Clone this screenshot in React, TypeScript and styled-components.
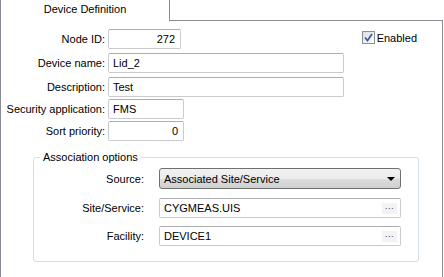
import * as React from "react";
import styled, { createGlobalStyle } from "styled-components";

const Global = createGlobalStyle`
	html, body {
		margin: 0;
		padding: 0;
		background: #ffffff;
	}
	body {
		font-family: "Liberation Sans", Arial, sans-serif;
		font-size: 11px;
		color: #000000;
	}
`;

const Page = styled.div`
	width: 444px;
	height: 277px;
	overflow: hidden;
	display: flex;
	flex-direction: column;
	background: #ffffff;
`;

const TabStrip = styled.div`
	display: flex;
	height: 21px;
	flex-shrink: 0;
`;

const Tab = styled.div`
	width: 170px;
	height: 21px;
	box-sizing: border-box;
	border-left: 1px solid #898c95;
	border-right: 1px solid #898c95;
	display: flex;
	align-items: center;
	justify-content: center;
	padding-bottom: 3px;
	background: #ffffff;
`;

const TabFiller = styled.div`
	width: 273px;
	height: 21px;
	box-sizing: border-box;
	border-bottom: 1px solid #898c95;
`;

const Panel = styled.div`
	flex: 1;
	width: 443px;
	box-sizing: border-box;
	border-left: 1px solid #898c95;
	border-right: 1px solid #898c95;
	padding-top: 8px;
	display: flex;
	flex-direction: column;
`;

const Row = styled.div<{ $gap?: number }>`
	display: flex;
	align-items: center;
	margin-top: ${p => p.$gap ?? 0}px;
`;

const Label = styled.div<{ $w: number }>`
	width: ${p => p.$w}px;
	flex-shrink: 0;
	text-align: right;
	white-space: nowrap;
`;

const Input = styled.div<{ $w?: number; $right?: boolean }>`
	box-sizing: border-box;
	height: 20px;
	width: ${p => (p.$w ? `${p.$w}px` : "auto")};
	flex: ${p => (p.$w ? "none" : "1")};
	border: 1px solid #c9cbd0;
	border-top-color: #abadb3;
	border-radius: 2px;
	display: flex;
	align-items: center;
	justify-content: ${p => (p.$right ? "flex-end" : "space-between")};
	padding: 0 5px 0 4px;
	white-space: nowrap;
`;

const Check = styled.label`
	margin-left: auto;
	margin-right: 25px;
	display: flex;
	align-items: center;
	gap: 2px;
	margin-top: -3px;
`;

const CheckBox = styled.span`
	width: 13px;
	height: 13px;
	box-sizing: border-box;
	border: 1px solid #8f8f8f;
	background: linear-gradient(135deg, #dcdcdc, #ffffff);
	display: flex;
	align-items: center;
	justify-content: center;
`;

const Group = styled.fieldset`
	margin: 10px 0 0 32px;
	width: 386px;
	box-sizing: border-box;
	height: 111px;
	border: 1px solid #d5dfe5;
	border-radius: 3px;
	padding: 4px 17px 0 0;
	min-inline-size: auto;
`;

const Legend = styled.legend`
	margin-left: 6px;
	padding: 0 3px;
	line-height: 13px;
`;

const GroupRows = styled.div`
	display: flex;
	flex-direction: column;
`;

const GroupLabel = styled(Label)`
	margin-right: 15px;
`;

const Select = styled.div`
	flex: 1;
	height: 21px;
	box-sizing: border-box;
	border: 1px solid #707070;
	border-radius: 3px;
	background: linear-gradient(#f2f2f2 0%, #ebebeb 50%, #dddddd 50%, #cfcfcf 100%);
	display: flex;
	align-items: center;
	justify-content: space-between;
	padding: 0 5px 0 4px;
`;

const Arrow = styled.span`
	width: 0;
	height: 0;
	border-left: 4px solid transparent;
	border-right: 4px solid transparent;
	border-top: 4px solid #000000;
`;

const Ellipsis = styled.span`
	width: 15px;
	height: 11px;
	margin-right: -2px;
	background: #f3f3f3;
	color: #4b1f7a;
	font-size: 9px;
	line-height: 7px;
	text-align: center;
	letter-spacing: 0.5px;
`;

export default function App() {
	return (
		<Page>
			<Global />
			<TabStrip>
				<Tab>Device Definition</Tab>
				<TabFiller />
			</TabStrip>
			<Panel>
				<Row>
					<Label $w={104}>Node ID:</Label>
					<Input $w={73} $right style={{ marginLeft: 3 }}>
						272
					</Input>
					<Check>
						<CheckBox>
							<svg width="9" height="9" viewBox="0 0 9 9">
								<path d="M1 4.5 L3.5 7.5 L8 1" fill="none" stroke="#3b5aa8" strokeWidth="1.8" />
							</svg>
						</CheckBox>
						Enabled
					</Check>
				</Row>
				<Row $gap={4}>
					<Label $w={104}>Device name:</Label>
					<Input $w={236} style={{ marginLeft: 3 }}>Lid_2</Input>
				</Row>
				<Row $gap={4}>
					<Label $w={104}>Description:</Label>
					<Input $w={236} style={{ marginLeft: 3 }}>Test</Input>
				</Row>
				<Row $gap={2}>
					<Label $w={104}>Security application:</Label>
					<Input $w={76} style={{ marginLeft: 3 }}>FMS</Input>
				</Row>
				<Row $gap={2}>
					<Label $w={104}>Sort priority:</Label>
					<Input $w={76} $right style={{ marginLeft: 3 }}>
						0
					</Input>
				</Row>
				<Group>
					<Legend>Association options</Legend>
					<GroupRows>
						<Row>
							<GroupLabel $w={110}>Source:</GroupLabel>
							<Select>
								Associated Site/Service
								<Arrow />
							</Select>
						</Row>
						<Row $gap={9}>
							<GroupLabel $w={110}>Site/Service:</GroupLabel>
							<Input>
								CYGMEAS.UIS
								<Ellipsis>...</Ellipsis>
							</Input>
						</Row>
						<Row $gap={8}>
							<GroupLabel $w={110}>Facility:</GroupLabel>
							<Input>
								DEVICE1
								<Ellipsis>...</Ellipsis>
							</Input>
						</Row>
					</GroupRows>
				</Group>
			</Panel>
		</Page>
	);
}
